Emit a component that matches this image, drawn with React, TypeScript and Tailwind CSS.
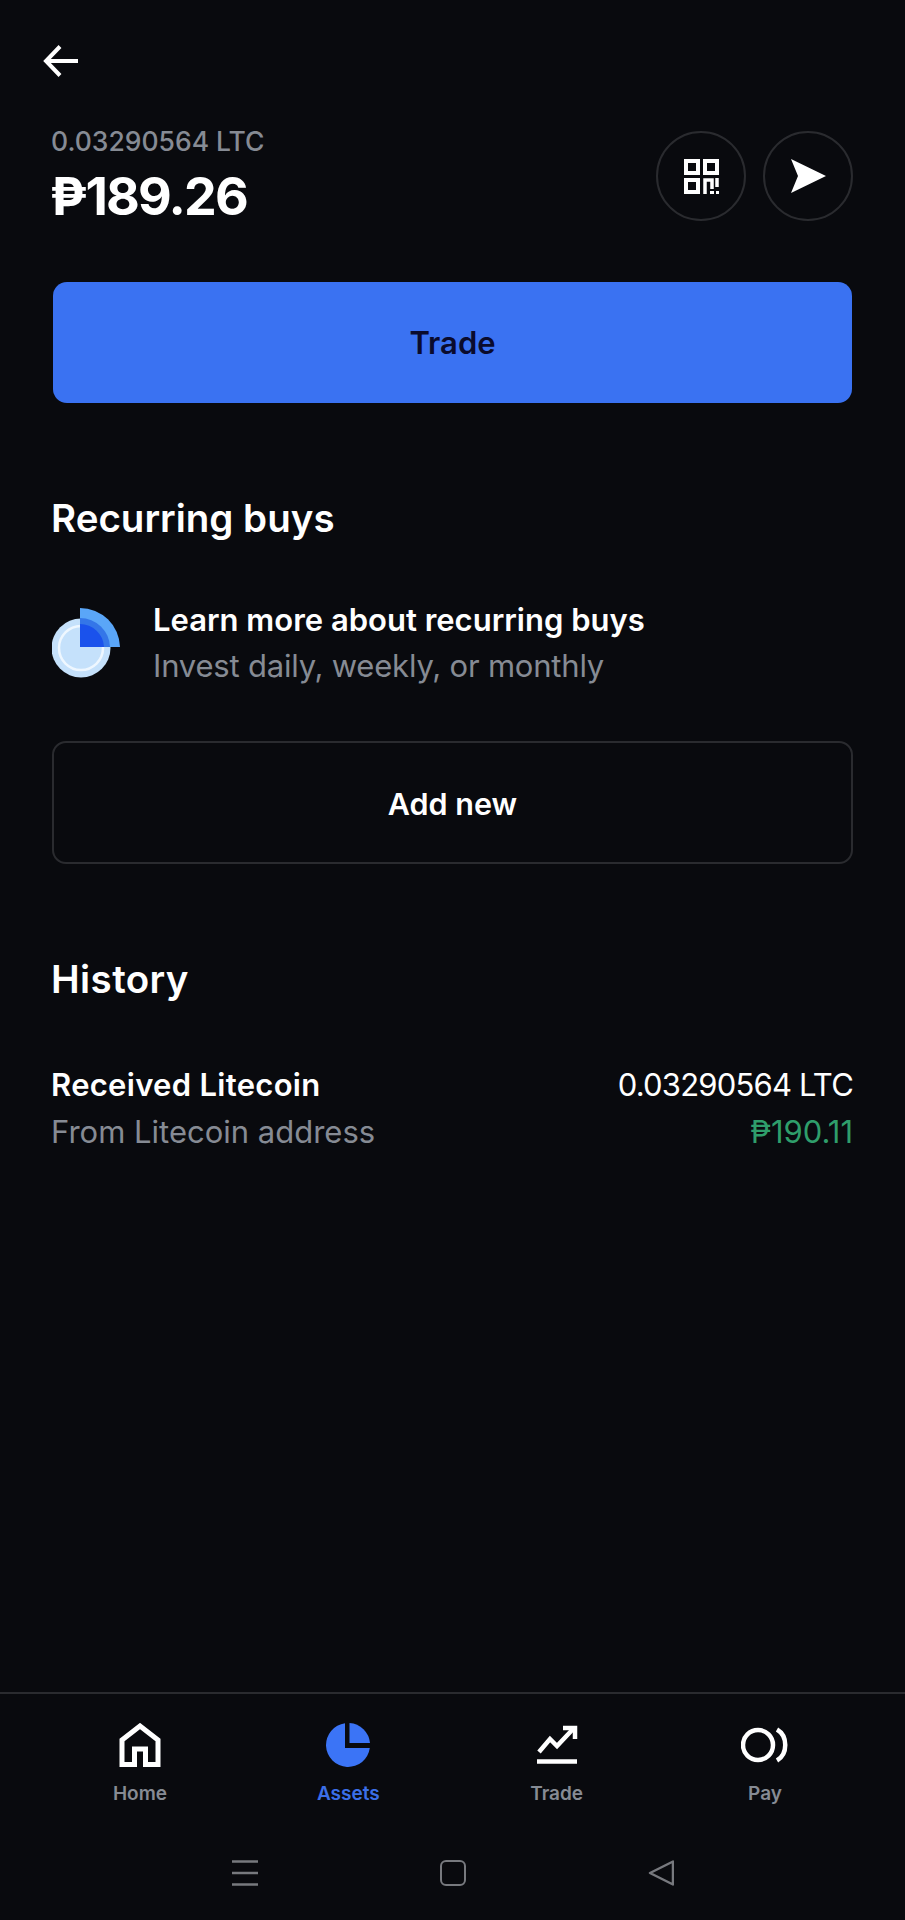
import type { ReactNode } from "react";

function QrIcon() {
  return (
    <svg width="35" height="35" viewBox="0 0 35 35" fill="none" stroke="#fff" strokeWidth="4">
      <rect x="2" y="2" width="12" height="12" />
      <rect x="21" y="2" width="12" height="12" />
      <rect x="2" y="21" width="12" height="12" />
      <path d="M21 35V21H28V30" strokeWidth="3.5" />
      <path d="M33 19V28" strokeWidth="3.5" />
      <path d="M26 33.5H30M32 33.5H35" strokeWidth="3" />
    </svg>
  );
}

function RecurringIcon() {
  return (
    <svg width="69" height="70" viewBox="0 0 69 70">
      <circle cx="29" cy="40" r="29.5" fill="#c5e1fb" />
      <circle cx="29" cy="40" r="22" fill="none" stroke="#eef7ff" strokeWidth="2.5" />
      <path d="M28 0A40 40 0 0 1 68 39H28Z" fill="#5aa6f8" />
      <path d="M28 10A30 30 0 0 1 58 39H28Z" fill="#3476e8" />
      <path d="M28 16A24 24 0 0 1 52 39H28Z" fill="#1a52ec" />
    </svg>
  );
}

function NavItem({ label, active, children }: { label: string; active?: boolean; children: ReactNode }) {
  return (
    <div className="flex flex-col items-center w-[208px]">
      <div className="h-[46px] flex items-center justify-center">{children}</div>
      <span className={`mt-[14px] text-[19px] leading-[24px] font-semibold ${active ? "text-[#3b6fe8]" : "text-[#868b94]"}`}>
        {label}
      </span>
    </div>
  );
}

export default function App() {
  return (
    <div className="w-[905px] h-[1920px] bg-[#090a0e] text-white flex flex-col font-['Inter',sans-serif]">
      <main className="flex-1 px-[52px]">
        <div className="pt-[45px] -ml-[9px]">
          <svg className="block" width="35" height="32" viewBox="0 0 35 32" fill="none" stroke="#fff" strokeWidth="4">
            <path d="M35 16H3M17 1.5L3 16L17 30.5" />
          </svg>
        </div>

        <div className="mt-[47px] flex items-center justify-between">
          <div>
            <p className="text-[26.5px] leading-[34px] font-medium text-[#868b94] -ml-[1px]">0.03290564 LTC</p>
            <p className="mt-[8px] text-[52px] leading-[62px] font-bold tracking-[-1.8px] -ml-[2px]">₱189.26</p>
          </div>
          <div className="flex gap-[17px]">
            <div className="w-[90px] h-[90px] rounded-full border-2 border-[#2a2b2f] flex items-center justify-center">
              <QrIcon />
            </div>
            <div className="w-[90px] h-[90px] rounded-full border-2 border-[#2a2b2f] flex items-center justify-center">
              <svg width="36" height="36" viewBox="0 0 36 36" fill="#fff">
                <path d="M1 1L36 18L1 35L8 18Z" />
              </svg>
            </div>
          </div>
        </div>

        <div className="mt-[54px] mx-[1px]">
          <button className="w-full h-[121px] pt-[2px] rounded-[14px] bg-[#3a72f2] text-[#0a0b2d] text-[31px] font-semibold">
            Trade
          </button>
        </div>

        <h2 className="mt-[92px] text-[38.5px] leading-[46px] font-semibold -ml-[1px]">Recurring buys</h2>

        <div className="mt-[56px] flex items-center gap-[32px]">
          <RecurringIcon />
          <div>
            <p className="text-[31px] leading-[46px] font-semibold">Learn more about recurring buys</p>
            <p className="text-[31px] leading-[46px] tracking-[-0.2px] text-[#868b94]">Invest daily, weekly, or monthly</p>
          </div>
        </div>

        <button className="mt-[52px] w-full h-[123px] pt-[2px] rounded-[14px] border-2 border-[#2a2b2f] text-[30.5px] font-semibold">
          Add new
        </button>

        <h2 className="pt-[92px] text-[38.5px] leading-[46px] tracking-[0.4px] font-semibold -ml-[1px]">History</h2>

        <div className="mt-[59px] flex justify-between text-[31px] leading-[47px]">
          <div className="-ml-[1px]">
            <p className="font-semibold tracking-[0.3px]">Received Litecoin</p>
            <p className="text-[#868b94]">From Litecoin address</p>
          </div>
          <div className="text-right">
            <p className="tracking-[-0.8px]">0.03290564 LTC</p>
            <p className="text-[#2f9e6b]">₱190.11</p>
          </div>
        </div>
      </main>

      <nav className="border-t-2 border-[#2a2b2f] h-[121px] pt-[28px] px-[36px] flex justify-between">
        <NavItem label="Home">
          <svg width="42" height="44" viewBox="0 0 42 44" fill="none" stroke="#fff" strokeWidth="5">
            <path d="M3 41.5V17L21 3L39 17V41.5H26.5V26H15.5V41.5Z" />
          </svg>
        </NavItem>
        <NavItem label="Assets" active>
          <svg width="44" height="44" viewBox="0 0 44 44" fill="#3b74f6">
            <path d="M19 0.2A22 22 0 1 0 43.8 25H19Z" />
            <path d="M23.5 0A22 22 0 0 1 44 20H23.5Z" />
          </svg>
        </NavItem>
        <NavItem label="Trade">
          <svg width="42" height="42" viewBox="0 0 42 42" fill="none" stroke="#fff" strokeWidth="4.5">
            <path d="M3 28L14 15L21 22L38 4" />
            <path d="M27 4H39V15" />
            <path d="M1 37.5H41" />
          </svg>
        </NavItem>
        <NavItem label="Pay">
          <svg width="48" height="36" viewBox="0 0 48 36" fill="none" stroke="#fff" strokeWidth="4.5">
            <circle cx="17" cy="18" r="15" />
            <path d="M36 2.5C47 9 47 27 36 33.5" />
          </svg>
        </NavItem>
      </nav>

      <div className="h-[107px] flex items-start justify-center gap-[182px] pt-[47px]">
        <svg width="26" height="26" viewBox="0 0 26 26" stroke="#77797e" strokeWidth="2.5">
          <path d="M0 1.5H26M0 13H26M0 24.5H26" />
        </svg>
        <div className="w-[26px] h-[26px] rounded-[6px] border-2 border-[#77797e]" />
        <svg width="26" height="26" viewBox="0 0 26 26" fill="none" stroke="#77797e" strokeWidth="2.5">
          <path d="M2 13L25 1.5V24.5Z" strokeLinejoin="round" />
        </svg>
      </div>
    </div>
  );
}
